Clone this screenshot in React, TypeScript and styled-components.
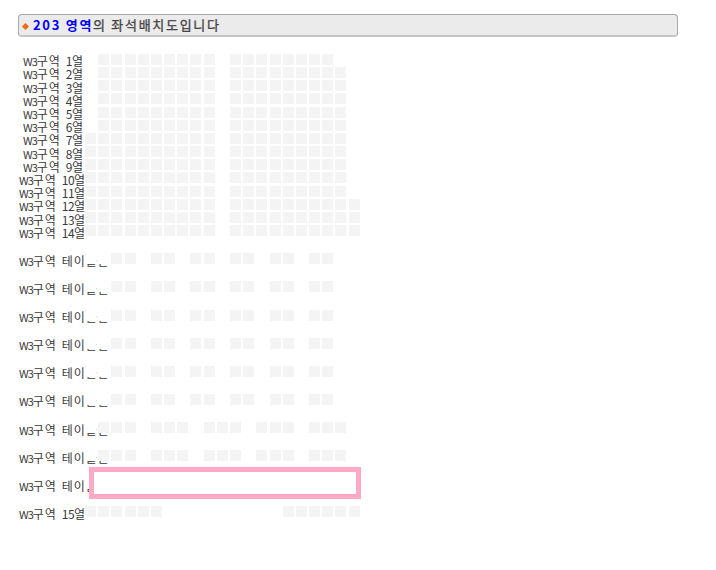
import React from "react";
import styled, { createGlobalStyle } from "styled-components";

const Global = createGlobalStyle`
  html, body { margin: 0; padding: 0; background: #fff; }
  body { font-family: "Noto Sans CJK KR", "Liberation Sans", sans-serif; }
`;

const Page = styled.div`
  padding: 14px 0 0 18px;
  width: 698px;
  height: 556px;
  overflow: hidden;
`;

const TitleBar = styled.div`
  box-sizing: border-box;
  width: 660px;
  height: 23px;
  display: flex;
  align-items: center;
  gap: 5px;
  padding-left: 4px;
  background: #ebebeb;
  border: 1px solid #a8a8a8;
  border-bottom: 2px solid #c4c4c4;
  border-radius: 4px;
  font-size: 13px;
  line-height: 20px;
  font-weight: 400;
  letter-spacing: 1.7px;
  color: #444;
  -webkit-text-stroke: 0.3px #444;
`;

const Diamond = styled.span`
  width: 5px;
  height: 5px;
  margin-top: 2px;
  background: #f26a10;
  transform: rotate(45deg);
  flex: none;
`;

const Accent = styled.b`
  color: #0000ff;
  -webkit-text-stroke: 0;
`;

const Chart = styled.div`
  margin-top: 16.8px;
`;

const Row = styled.div<{ $gap?: boolean }>`
  position: relative;
  display: flex;
  height: 13.2px;
  margin-top: ${(p) => (p.$gap ? 14.95 : 0)}px;
`;

const Label = styled.div<{ $inset?: boolean }>`
  box-sizing: border-box;
  width: 67.1px;
  height: 13.2px;
  flex: none;
  padding: 0.5px 0 0 ${(p) => (p.$inset ? 5 : 1)}px;
  font-size: 12px;
  line-height: 13px;
  letter-spacing: 1px;
  word-spacing: 1.2px;
  color: #3a3a3a;
  white-space: nowrap;
`;

const Block = styled.span`
  font-size: 11px;
  letter-spacing: -1px;
`;

const Digits = styled.span`
  letter-spacing: -0.5px;
`;

const Seats = styled.div`
  position: relative;
  z-index: 1;
  display: grid;
  grid-template-columns: repeat(21, 13.18px);
`;

const Seat = styled.span<{ $on: boolean }>`
  display: block;
  width: 11px;
  height: 11px;
  background: ${(p) => (p.$on ? "#f4f4f4" : "#fff")};
`;

const Highlight = styled.div`
  position: absolute;
  z-index: 2;
  left: 71px;
  top: -11px;
  box-sizing: border-box;
  width: 272px;
  height: 32px;
  background: #fff;
  border: 5px solid #ffa9c6;
`;

const range = (a: number, b: number) =>
  Array.from({ length: b - a + 1 }, (_, i) => a + i);

const front = (row: number) => [
  ...range(row >= 7 ? 0 : 1, 9),
  ...range(11, row === 1 ? 18 : row >= 12 ? 20 : 19),
];
const pairs = [2, 3, 5, 6, 8, 9, 11, 12, 14, 15, 17, 18];
const triples = [1, 2, 3, 5, 6, 7, 9, 10, 11, 13, 14, 15, 17, 18, 19];
const last = [...range(0, 5), ...range(15, 20)];

type RowData = {
  num?: number;
  name?: string;
  seats: number[];
  gap?: boolean;
  picked?: boolean;
};

const table = "테이블존";

const rows: RowData[] = [
  ...range(1, 14).map((n) => ({ num: n, seats: front(n) })),
  { name: table, seats: pairs, gap: true },
  { name: table, seats: pairs, gap: true },
  { name: table, seats: pairs, gap: true },
  { name: table, seats: pairs, gap: true },
  { name: table, seats: pairs, gap: true },
  { name: "테이블를", seats: pairs, gap: true },
  { name: table, seats: triples, gap: true },
  { name: table, seats: triples, gap: true },
  { name: table, seats: [], gap: true, picked: true },
  { num: 15, seats: last, gap: true },
];

export default function App() {
  return (
    <Page>
      <Global />
      <TitleBar>
        <Diamond />
        <span>
          <Accent>203 영역</Accent>의 좌석배치도입니다
        </span>
      </TitleBar>
      <Chart>
        {rows.map((r, i) => (
          <Row key={i} $gap={r.gap}>
            <Label $inset={r.num !== undefined && r.num < 10}>
              <Block>W3</Block>구역{" "}
              {r.num !== undefined ? (
                <>
                  <Digits>{r.num}</Digits>열
                </>
              ) : (
                r.name
              )}
            </Label>
            <Seats>
              {range(0, 20).map((c) => (
                <Seat key={c} $on={r.seats.includes(c)} />
              ))}
            </Seats>
            {r.picked && <Highlight />}
          </Row>
        ))}
      </Chart>
    </Page>
  );
}
